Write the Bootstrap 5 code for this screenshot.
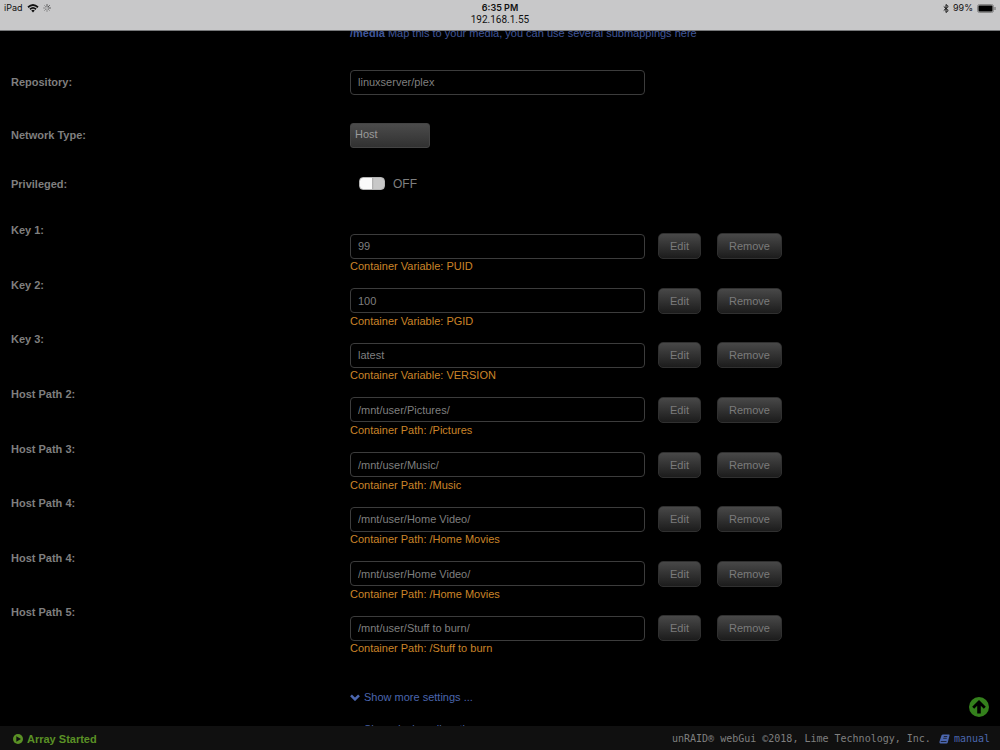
<!DOCTYPE html>
<html lang="en">
<head>
<meta charset="utf-8">
<meta name="viewport" content="width=device-width, initial-scale=1">
<title>Update Container</title>
<link href="https://cdn.jsdelivr.net/npm/bootstrap@5.3.0/dist/css/bootstrap.min.css" rel="stylesheet">
<style>
  body { background: #000; color: #7f7f7f; font: 11px/14px "Liberation Sans", Arial, sans-serif; padding: 26px 0 0; }
  a, .doc-line { color: #4b66ae; text-decoration: none; }
  .doc-line { color: #40579a; }

  .status-bar { background: #c8c8c9; color: #111; height: 31px; border-bottom: 1px solid #77787a; font: 9px/12px Inter, Roboto, sans-serif; padding: 2px 4px 0; }
  .status-bar .side { flex: 1 1 0; height: 12px; }
  .status-bar .host { font: 10px/12px Roboto, sans-serif; }

  .setting { display: grid; grid-template-columns: 35% 1fr; }
  .setting > label { padding-left: 11px; font-weight: bold; }
  .tall { align-items: center; }
  .h-repo { height: 50px; margin-top: 17px; }
  .h-net { height: 56px; }
  .h-priv { height: 42px; }

  .form-control.field { width: 295px; height: 25px; padding: 0 7px; background: #000; color: #7f7f7f; border: 1px solid #3c3c3c; border-radius: 4px; font-size: 11px; line-height: 14px; }
  .form-select.net { width: 80px; height: 25px; padding: 0 4px 2px; background: linear-gradient(#4b4b4b, #313131); color: #9a9a9a; border: 1px solid #444; border-radius: 3px; font-size: 11px; line-height: 14px; }
  .btn.act { height: 26px; padding: 0 11px; font-size: 11px; line-height: 14px; color: #7b7b7b; background: linear-gradient(#484848, #1c1c1c); border: 1px solid #303030; border-radius: 5px; }
  .act-edit { margin-left: 13px; }
  .act-remove { margin-left: 16px; }

  .switch-box { appearance: none; width: 26px; height: 13px; margin: 0 8px 2px 9px; border-radius: 4px; background: linear-gradient(90deg, #fafafa 12px, #aaa 12px, #c8c8c8 14px); border: 1px solid #b5b5b5; }
  .switch-text { font-size: 12px; }

  .mappings { display: grid; grid-auto-rows: 1fr; margin-top: 14px; min-height: 437px; }
  .mappings .setting > label { padding-top: 4px; }
  .mappings .control { padding-top: 14px; }
  .hint { color: #cb8428; }

  .more { margin-left: 35%; padding-top: 34px; height: 80px; overflow: hidden; }
  .more .second { margin: 18px 0 0 14px; }

  .to-top { right: 11px; bottom: 33px; width: 20px; height: 20px; line-height: 0; z-index: 1031; }
  .foot { background: #101010; height: 24px; padding: 1px 10px 0 13px; }
  .foot .array { color: #5a9125; font-weight: bold; }
  .foot .credit { font: 10px/14px "DejaVu Sans Mono", monospace; }
</style>
</head>
<body>
<header class="status-bar fixed-top d-flex align-items-start">
  <div class="side d-flex align-items-center">
    <span>iPad</span>
    <svg class="ms-1" width="12" height="9" viewBox="0 0 24 18" fill="none" stroke="#111" stroke-width="3.4"><path d="M2 6.500Q12-2.500 22 6.500M6 10.500Q12 5 18 10.500"/><path d="M8.500 13Q12 10 15.500 13L12 17Z" fill="#111" stroke="none"/></svg>
    <svg class="ms-1" width="8" height="8" viewBox="0 0 16 16" stroke="#777" stroke-width="1.500" stroke-linecap="round"><path d="M8 1v4M13 3l-3 3M15 8h-4" stroke="#333"/><path d="M13 13l-3-3M8 15v-4M3 13l3-3M1 8h4M3 3l3 3"/></svg>
  </div>
  <div class="text-center"><div class="fw-semibold">6:35 PM</div><div class="host">192.168.1.55</div></div>
  <div class="side d-flex align-items-center justify-content-end">
    <svg class="me-1" width="6" height="9" viewBox="0 0 12 18" fill="none" stroke="#111" stroke-width="2"><path d="M1.500 5l9 8L6 17V1l4.500 4-9 8"/></svg>
    <span>99%</span>
    <svg class="ms-1" width="19" height="9" viewBox="0 0 19 9"><rect x=".5" y=".5" width="16" height="8" rx="2" fill="#b5b5b5" stroke="#888"/><rect x="1.500" y="1.500" width="14" height="6" rx="1" fill="#000"/><path d="M18 3v3" stroke="#666"/></svg>
  </div>
</header>

<main>
  <div class="setting"><span></span><div class="doc-line"><b>/media</b> Map this to your media, you can use several submappings here</div></div>
  <div class="setting tall h-repo"><label for="repo">Repository:</label><div><input id="repo" class="form-control field" value="linuxserver/plex"></div></div>
  <div class="setting tall h-net"><label for="net">Network Type:</label><div><select id="net" class="form-select net"><option>Host</option></select></div></div>
  <div class="setting tall h-priv"><label for="priv">Privileged:</label><div class="d-flex align-items-center"><input id="priv" type="checkbox" role="switch" class="switch-box"><span class="switch-text">OFF</span></div></div>

  <div class="mappings" id="mappings"></div>

  <div class="more">
    <a href="#" class="d-flex align-items-center"><svg class="me-1" width="10" height="7" viewBox="0 0 10 7" fill="none" stroke="#4b66ae" stroke-width="2.600"><path d="M1 1.300l4 4 4-4"/></svg>Show more settings ...</a>
    <a href="#" class="second d-block">Show docker allocations ...</a>
  </div>
</main>

<a href="#" class="to-top position-fixed" aria-label="Back to top"><svg width="20" height="20" viewBox="0 0 20 20"><circle cx="10" cy="10" r="10" fill="#34801c"/><path d="M10 3l6.800 6.800-2 2-3-3V16.500H8.200V8.800l-3 3-2-2Z" fill="#000"/></svg></a>

<footer class="foot fixed-bottom d-flex align-items-center justify-content-between">
  <span class="array d-flex align-items-center"><svg class="me-1" width="10" height="10" viewBox="0 0 10 10"><circle cx="5" cy="5" r="5" fill="#5a9125"/><path d="M3.300 2.200L8 5 3.300 7.800Z" fill="#101010"/></svg>Array Started</span>
  <span class="credit d-flex align-items-center">unRAID® webGui ©2018, Lime Technology, Inc.<a href="#" class="d-flex align-items-center ms-2"><svg class="me-1" width="11" height="10" viewBox="0 0 22 20"><path d="M8 1H20Q21.500 1 21 3L17.500 17Q17 19 15 19H3Q0 19 1 15L5 3Q6 1 8 1Z" fill="#4b66ae"/><path d="M9.500 5h7M8.500 8.500h7M3.500 15h11.500" stroke="#101010" stroke-width="1.500"/></svg>manual</a></span>
</footer>

<script src="https://cdn.jsdelivr.net/npm/bootstrap@5.3.0/dist/js/bootstrap.bundle.min.js"></script>
<script>
  const rows = [
    ["Key 1", "99", "Variable: PUID"],
    ["Key 2", "100", "Variable: PGID"],
    ["Key 3", "latest", "Variable: VERSION"],
    ["Host Path 2", "/mnt/user/Pictures/", "Path: /Pictures"],
    ["Host Path 3", "/mnt/user/Music/", "Path: /Music"],
    ["Host Path 4", "/mnt/user/Home Video/", "Path: /Home Movies"],
    ["Host Path 4", "/mnt/user/Home Video/", "Path: /Home Movies"],
    ["Host Path 5", "/mnt/user/Stuff to burn/", "Path: /Stuff to burn"]
  ];
  document.getElementById("mappings").innerHTML = rows.map(([name, value, hint], i) => `
    <div class="setting">
      <label for="map${i}">${name}:</label>
      <div class="control">
        <div class="d-flex align-items-center">
          <input id="map${i}" class="form-control field" value="${value}">
          <button type="button" class="btn act act-edit">Edit</button>
          <button type="button" class="btn act act-remove">Remove</button>
        </div>
        <div class="hint">Container ${hint}</div>
      </div>
    </div>`).join("");
</script>
</body>
</html>
